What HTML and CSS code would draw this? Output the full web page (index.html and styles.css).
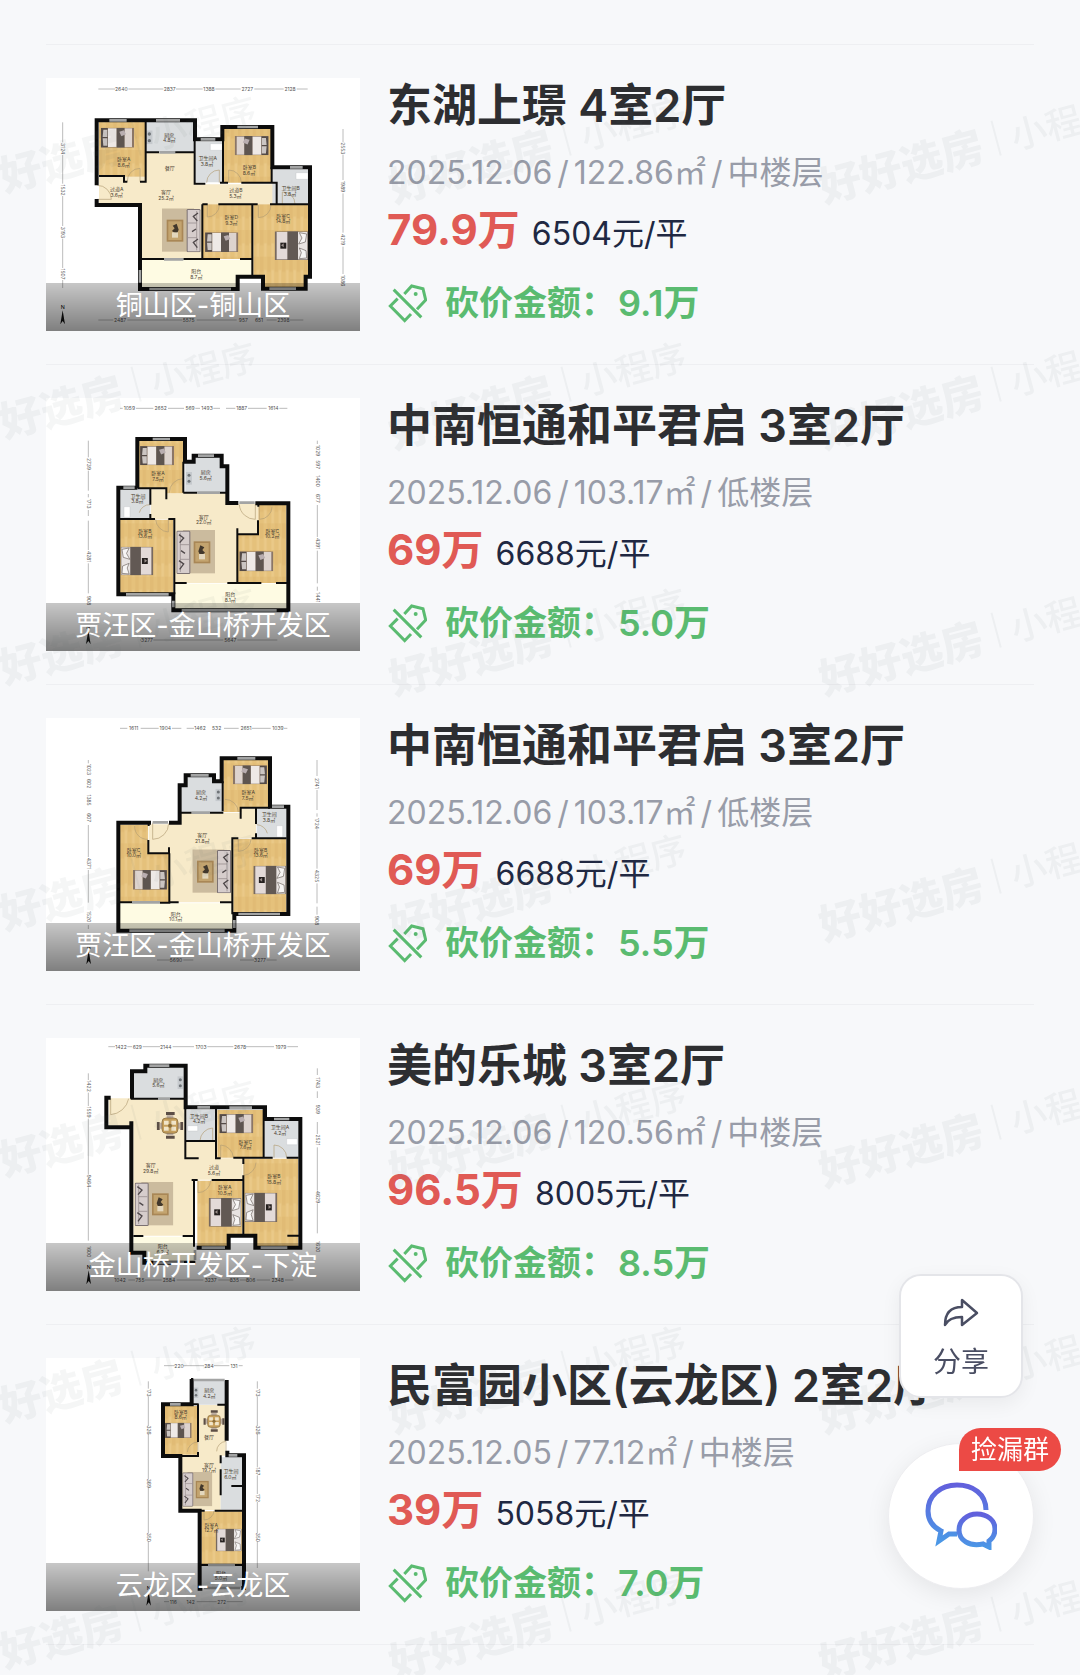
FILE: index.html
```html
<!DOCTYPE html>
<html lang="zh-CN">
<head>
    <meta charset="UTF-8">
    <meta name="viewport" content="width=device-width, initial-scale=1.0">
    <title>好好选房</title>
    <link rel="stylesheet" href="styles.css">
</head>
<body>
    <!-- shared symbols -->
    <svg class="defs" aria-hidden="true">
        <linearGradient id="chatGradient" x1="0" y1="0" x2="0" y2="1">
            <stop offset="0" stop-color="#6260dc"/>
            <stop offset="1" stop-color="#4b97e6"/>
        </linearGradient>
        <pattern id="wood" width="22" height="80" patternUnits="userSpaceOnUse">
            <rect width="22" height="80" fill="#e5c17b"/>
            <rect width="10" height="46" fill="#e1bb75"/>
            <rect x="12" y="40" width="8" height="40" fill="#eac988"/>
        </pattern>
        <symbol id="cut" viewBox="10 15 120 120">
            <path d="M62 48 84 24l34 8 8 34-26 28M42 62 20 84l43 44 19-20M30 35l83 83" fill="none" stroke="currentColor" stroke-width="9"/>
            <circle cx="96" cy="48" r="6" fill="currentColor"/>
        </symbol>
        <symbol id="bed" viewBox="0 0 100 60" preserveAspectRatio="none">
            <rect width="100" height="60" fill="#8b7666"/>
            <rect x="1" y="1" width="20" height="58" fill="#544b47"/>
            <path d="M8 6h12v22H6zM6 32h14v22H8z" fill="#cbc5c2"/>
            <rect x="22" y="2" width="26" height="56" fill="#eee9e6"/>
            <rect x="48" y="0" width="24" height="60" fill="#5e5550"/>
            <rect x="72" y="2" width="22" height="56" fill="#ddd3ce"/>
            <path d="M56 12l14-4 6 12-14 6z" fill="#b9aeb0"/>
        </symbol>
        <symbol id="bigbed" viewBox="0 0 100 86" preserveAspectRatio="none">
            <rect width="100" height="86" fill="#77695f"/>
            <rect x="2" y="2" width="28" height="82" fill="#e8e3e1"/>
            <path d="M4 8l22-4-8 16 10 18-20-6zM4 80l22 2-6-18 6-14L6 58z" fill="#f7f5f4" stroke="#6b625d" stroke-width="2"/>
            <rect x="30" width="32" height="86" fill="#625954"/>
            <rect x="62" y="2" width="32" height="82" fill="#e3dad8"/>
            <rect x="65" y="34" width="18" height="18" fill="#25201f"/>
            <path d="M73 36l8 6-8 6z" fill="#9b8f8c"/>
        </symbol>
        <symbol id="sofa" viewBox="0 0 116 132" preserveAspectRatio="none">
            <rect x="20" width="96" height="130" fill="#cbbb9e"/>
            <rect x="52" y="34" width="50" height="66" fill="#a98756"/>
            <rect x="57" y="39" width="40" height="56" fill="#c3a46f"/>
            <path d="M72 46l12 6-6 8 8 8-14 10-6-14z" fill="#42382c"/>
            <rect x="68" y="72" width="18" height="16" fill="#e3d7bd"/>
            <rect x="0" y="2" width="42" height="130" rx="4" fill="#7b7172"/>
            <rect x="3" y="5" width="36" height="124" fill="#d6cdcc"/>
            <path d="M12 8v118M12 44h26M12 88h26" stroke="#8d8283" stroke-width="2"/>
            <path d="M8 14l14 10-12 14M8 92l14 10-12 16M14 62l12 8" fill="none" stroke="#4f484a" stroke-width="4"/>
        </symbol>
        <symbol id="table" viewBox="0 0 80 80">
            <path d="M28 0h26v9H28zM28 71h26v9H28zM0 30h9v24H0zM71 30h9v24h-9z" fill="#5c4e46"/>
            <path d="M30 10h20v12H30zM30 58h20v12H30zM10 32h12v18H10zM58 32h12v18H58z" fill="#bfb0a5"/>
            <rect x="16" y="18" width="48" height="46" rx="12" fill="#c69f5c" stroke="#7b6238" stroke-width="2"/>
            <path d="M22 26h14v12H22zM44 26h14v12H44zM22 44h14v12H22zM44 44h14v12H44z" fill="#f1e5c9"/>
            <circle cx="40" cy="41" r="6" fill="#8d6f3b"/>
        </symbol>
        <symbol id="stove" viewBox="0 0 20 42">
            <rect width="20" height="42" fill="#c5c9cd"/>
            <circle cx="10" cy="11" r="5" fill="#6e7377"/>
            <circle cx="10" cy="31" r="5" fill="#6e7377"/>
        </symbol>
        <symbol id="north" viewBox="0 0 20 60">
            <text x="10" y="13" text-anchor="middle">N</text>
            <path d="M10 18 17 60 10 50 3 60z" fill="#111"/>
        </symbol>
    </svg>

    <main class="list">
        <a class="house" href="#">
            <div class="photo">
                <svg class="plan" viewBox="18 24 942 759" role="img" aria-label="东湖上璟户型图">
                    <path class="floor" d="M177 320h138v-73h147v96h248v60H488v164H305V400H177z"/>
                    <path class="wood" d="M177 155h138v165H177zM552 175h142v163H552zM488 403h148v164H488zM640 403h165v214h-13v38H675v-38h-35z"/>
                    <path class="tile" d="M317 155h145v92H317zM467 215h82v122h-82zM697 298h110v105H697z"/>
                    <path class="balcony" d="M305 570h332v47h-47v38H305z"/>
                    <use href="#bed" x="182" y="173" width="100" height="60"/>
                    <use href="#bed" transform="translate(686 198) scale(-1 1)" width="102" height="58"/>
                    <use href="#bed" x="495" y="487" width="100" height="59"/>
                    <use href="#bigbed" transform="translate(804 484) scale(-1 1)" width="100" height="86"/>
                    <use href="#sofa" transform="translate(482 415) scale(-1 1)" width="116" height="132"/>
                    <use href="#stove" x="318" y="181" width="20" height="42"/>
                    <path class="fixture" d="M511 221h36v20h-36zM768 308h36v20h-36z"/>
                    <path class="door" d="M262 335a38 38 0 0 1 38-40v40M500 338a38 38 0 0 1 38-38v38M566 338v-38a38 38 0 0 1 38 38M172 346a42 42 0 0 1 42 42h-42M502 405v36a36 36 0 0 0 36-36M655 405v38a38 38 0 0 0 38-38M727 402v-36a36 36 0 0 1 38 36"/>
                    <path class="wall" d="M170 346V151h295v57h82v-37h150v121h113v328h-13v36H669v-36h-76v37H300V405H170v-18"/>
                    <path class="inner" d="M317 151v184h-17M177 318h75v17h10M317 247h40M405 247h60M464 208v133h32M540 338h24M549 208v130M604 338h90M695 292v46h15v65M487 403v164M487 403h16M535 403h118M690 403h120M637 403v214M300 567h72M430 567h110M600 567h37"/>
                    <path class="window" d="M208 151h52M348 151h72M482 208h44M592 171h62M750 292h38M328 657h245M688 656h80M300 600v38M358 247h48M372 568h58"/>
                    <path class="dim" d="M175 57h50M265 57h105M408 57h80M526 57h76M643 57h88M770 57h33M68 157v60M68 255v86M68 378v90M68 506v88M68 630v24M909 177v40M909 254v76M909 370v118M909 530v82M175 750h45M262 750h165M470 750h120M680 750h30M750 750h40"/>
                    <g class="size">
                        <text x="244" y="62">2640</text><text x="389" y="62">2837</text><text x="507" y="62">1388</text><text x="622" y="62">2727</text><text x="750" y="62">2128</text>
                        <text transform="translate(63 236) rotate(90)">3124</text><text transform="translate(63 360) rotate(90)">1532</text><text transform="translate(63 487) rotate(90)">3193</text><text transform="translate(63 612) rotate(90)">1507</text>
                        <text transform="translate(904 235) rotate(90)">2553</text><text transform="translate(904 350) rotate(90)">1989</text><text transform="translate(904 509) rotate(90)">4219</text><text transform="translate(904 632) rotate(90)">1086</text>
                        <text x="240" y="755">2487</text><text x="446" y="755">5575</text><text x="610" y="755">957</text><text x="657" y="755">651</text><text x="730" y="755">2398</text>
                    </g>
                    <g class="room">
                        <text x="251" y="274">卧室A</text><text x="251" y="291">8.6㎡</text><text x="388" y="200">厨房</text><text x="388" y="216">4.8㎡</text><text x="389" y="301">餐厅</text>
                        <text x="503" y="270">卫生间A</text><text x="501" y="287">3.8㎡</text><text x="628" y="297">卧室B</text><text x="627" y="314">8.6㎡</text><text x="230" y="364">过道A</text><text x="230" y="381">3.6㎡</text>
                        <text x="378" y="372">客厅</text><text x="378" y="389">25.2㎡</text><text x="588" y="366">过道B</text><text x="586" y="384">5.3㎡</text><text x="752" y="361">卫生间B</text><text x="750" y="379">3.8㎡</text>
                        <text x="574" y="448">卧室D</text><text x="574" y="465">9.3㎡</text><text x="729" y="443">卧室C</text><text x="729" y="460">14.8㎡</text><text x="469" y="610">阳台</text><text x="469" y="627">8.7㎡</text>
                    </g>
                    <use href="#north" x="58" y="702" width="20" height="62"/>
                </svg>
                <span class="area">铜山区-铜山区</span>
            </div>
            <div class="info">
                <h2>东湖上璟 4室2厅</h2>
                <p class="meta"><span>2025.12.06</span><span>/</span><span>122.86㎡</span><span>/</span><span>中楼层</span></p>
                <p class="price"><strong>79.9万</strong><span>6504元/平</span></p>
                <p class="bargain"><svg aria-hidden="true"><use href="#cut"/></svg>砍价金额：<span>9.1万</span></p>
            </div>
        </a>

        <a class="house" href="#">
            <div class="photo">
                <svg class="plan" viewBox="18 24 942 759" role="img" aria-label="中南恒通和平君启户型图">
                    <path class="floor" d="M333 298h50v12h178v31h94v92h-63v146H403V387h-70z"/>
                    <path class="wood" d="M294 152h137v158h-51v-15h-86zM240 389h160v223H240zM655 345h84v234H592V433h63z"/>
                    <path class="tile" d="M436 217h30v-18h78v30h15v78H436zM241 298h90v88h-90z"/>
                    <path class="balcony" d="M405 581h336v77H405z"/>
                    <use href="#bed" x="300" y="168" width="102" height="58"/>
                    <use href="#bigbed" x="242" y="470" width="98" height="86"/>
                    <use href="#bed" x="598" y="484" width="102" height="60"/>
                    <use href="#sofa" x="409" y="420" width="116" height="132"/>
                    <use href="#stove" x="438" y="245" width="18" height="40"/>
                    <path class="fixture" d="M252 350h18v32h-18z"/>
                    <path class="door" d="M388 308a42 42 0 0 1 42-42M347 388a40 40 0 0 0 38 38v-38M298 368a32 32 0 0 1 32-24M598 344a48 48 0 0 0 48 44v-44M658 350v38a38 38 0 0 0 38-38"/>
                    <path class="wall" d="M292 294V147h143v68h26v-18h84v32h17v110h33M646 340h99v321H400v-48H235V293h57"/>
                    <path class="inner" d="M292 295h87v33M331 298v46M331 372v14M240 387h105M385 387h18v226M430 215v93M430 308h42M540 308h22M655 340v10M592 415v18h62v-42M592 433v146h-30M592 579h72M708 579h37M400 579h40"/>
                    <path class="window" d="M338 147h52M474 197h48M250 293h34M258 613h128M425 661h285M400 632v20M472 308h68M598 338h46"/>
                    <path class="dim" d="M240 55h8M288 55h52M384 55h48M466 55h14M520 55h20M558 55h28M624 55h56M718 55h24M145 152v50M145 242v60M145 312v10M145 360v18M145 392v88M145 520v90M832 152v10M832 345v96M832 482v98M832 590v12M300 750h4M340 750h210M592 750h120"/>
                    <g class="size">
                        <text x="268" y="61">1059</text><text x="362" y="61">2652</text><text x="450" y="61">569</text><text x="501" y="61">1493</text><text x="605" y="61">1887</text><text x="700" y="61">1614</text>
                        <text transform="translate(140 222) rotate(90)">2739</text><text transform="translate(140 341) rotate(90)">1713</text><text transform="translate(140 500) rotate(90)">4281</text><text transform="translate(140 632) rotate(90)">908</text>
                        <text transform="translate(827 182) rotate(90)">1029</text><text transform="translate(827 224) rotate(90)">597</text><text transform="translate(827 273) rotate(90)">1400</text><text transform="translate(827 325) rotate(90)">677</text><text transform="translate(827 461) rotate(90)">4391</text><text transform="translate(827 622) rotate(90)">1441</text>
                        <text x="321" y="756">3277</text><text x="571" y="756">5647</text>
                    </g>
                    <g class="room">
                        <text x="354" y="255">卧室A</text><text x="354" y="272">7.5㎡</text><text x="497" y="253">厨房</text><text x="497" y="270">5.6㎡</text><text x="294" y="323">卫生间</text><text x="292" y="340">3.8㎡</text>
                        <text x="491" y="386">客厅</text><text x="491" y="403">22.0㎡</text><text x="315" y="428">卧室B</text><text x="315" y="445">13.6㎡</text><text x="697" y="428">卧室C</text><text x="697" y="445">10.2㎡</text><text x="571" y="618">阳台</text><text x="571" y="635">8.1㎡</text>
                    </g>
                    <use href="#north" x="135" y="702" width="20" height="62"/>
                </svg>
                <span class="area">贾汪区-金山桥开发区</span>
            </div>
            <div class="info">
                <h2>中南恒通和平君启 3室2厅</h2>
                <p class="meta"><span>2025.12.06</span><span>/</span><span>103.17㎡</span><span>/</span><span>低楼层</span></p>
                <p class="price"><strong>69万</strong><span>6688元/平</span></p>
                <p class="bargain"><svg aria-hidden="true"><use href="#cut"/></svg>砍价金额：<span>5.0万</span></p>
            </div>
        </a>

        <a class="house" href="#">
            <div class="photo">
                <svg class="plan" viewBox="18 24 942 759" role="img" aria-label="中南恒通和平君启户型图">
                    <path class="floor" d="M423 308h178v-12h47v88h-70v193H388V431h-62v-88h97z"/>
                    <path class="wood" d="M550 150h136v142h-82v14h-54zM580 386h159v225H580zM240 344h84v87h63v146H240z"/>
                    <path class="tile" d="M425 228h15v-30h78v18h28v90H425zM650 296h90v88h-90z"/>
                    <path class="balcony" d="M240 580h338v78H240z"/>
                    <use href="#bed" transform="translate(681 166) scale(-1 1)" width="102" height="57"/>
                    <use href="#bed" transform="translate(381 480) scale(-1 1)" width="102" height="59"/>
                    <use href="#bigbed" transform="translate(738 467) scale(-1 1)" width="98" height="86"/>
                    <use href="#sofa" transform="translate(573 418) scale(-1 1)" width="116" height="132"/>
                    <use href="#stove" x="526" y="236" width="18" height="38"/>
                    <path class="fixture" d="M710 347h18v34h-18z"/>
                    <path class="door" d="M555 268a40 40 0 0 1 40 38M595 388v36a38 38 0 0 0 38-36M650 344a34 34 0 0 1 32 26M338 338v50a48 48 0 0 0 48-48M284 348a38 38 0 0 0 40 40"/>
                    <path class="wall" d="M333 338h-98v324h348v-50h162V290h-55V145H545v69h-23v-18h-85v30h-18v112h-32"/>
                    <path class="inner" d="M548 214v90M510 308h40M419 308h36M690 293h-88v33M648 296v46M648 370v14M740 385H635M595 385h-18v228M326 338v10M325 390v40h62v-18M388 430v148H360M240 577h36M388 577h28M540 577h40"/>
                    <path class="window" d="M592 145h54M452 196h54M696 290h36M595 612h125M268 662h286M583 630v24M338 337h46M455 308h55M276 577h84"/>
                    <path class="dim" d="M240 55h22M302 55h54M396 55h28M440 55h22M552 55h44M636 55h56M732 55h10M145 150v10M145 345v96M145 480v98M145 645v12M831 150v48M831 240v60M831 310v10M831 358v118M831 520v60M831 590v24M391 750h-40M430 750h30M600 750h42M680 750h30"/>
                    <g class="size">
                        <text x="281" y="61">1611</text><text x="376" y="61">1904</text><text x="480" y="61">1462</text><text x="530" y="61">532</text><text x="618" y="61">2651</text><text x="714" y="61">1039</text>
                        <text transform="translate(140 178) rotate(90)">1023</text><text transform="translate(140 221) rotate(90)">602</text><text transform="translate(140 270) rotate(90)">1385</text><text transform="translate(140 323) rotate(90)">607</text><text transform="translate(140 460) rotate(90)">4371</text><text transform="translate(140 620) rotate(90)">1520</text>
                        <text transform="translate(826 220) rotate(90)">2741</text><text transform="translate(826 340) rotate(90)">1724</text><text transform="translate(826 498) rotate(90)">4325</text><text transform="translate(826 632) rotate(90)">908</text>
                        <text x="408" y="756">5690</text><text x="660" y="756">3277</text>
                    </g>
                    <g class="room">
                        <text x="625" y="253">卧室A</text><text x="623" y="270">7.5㎡</text><text x="483" y="252">厨房</text><text x="483" y="269">4.2㎡</text><text x="688" y="319">卫生间</text><text x="687" y="336">3.8㎡</text>
                        <text x="487" y="382">客厅</text><text x="487" y="400">21.8㎡</text><text x="662" y="426">卧室B</text><text x="662" y="442">13.6㎡</text><text x="281" y="425">卧室C</text><text x="281" y="442">10.0㎡</text><text x="407" y="617">阳台</text><text x="407" y="634">10.1㎡</text>
                    </g>
                    <use href="#north" x="136" y="702" width="20" height="62"/>
                </svg>
                <span class="area">贾汪区-金山桥开发区</span>
            </div>
            <div class="info">
                <h2>中南恒通和平君启 3室2厅</h2>
                <p class="meta"><span>2025.12.06</span><span>/</span><span>103.17㎡</span><span>/</span><span>低楼层</span></p>
                <p class="price"><strong>69万</strong><span>6688元/平</span></p>
                <p class="bargain"><svg aria-hidden="true"><use href="#cut"/></svg>砍价金额：<span>5.5万</span></p>
            </div>
        </a>

        <a class="house" href="#">
            <div class="photo">
                <svg class="plan" viewBox="18 24 942 759" role="img" aria-label="美的乐城户型图">
                    <path class="floor" d="M206 205h228v128h93v52h81v64H462v168H280V287h-74z"/>
                    <path class="wood" d="M532 240h137v143H532zM610 386h164v264H650v-33h-40zM472 452h135v163h-42v35h-93z"/>
                    <path class="tile" d="M282 130h38v-18h114v93H282zM440 240h86v92h-86zM674 272h102v111H674z"/>
                    <path class="balcony" d="M280 620h182v76H318v-30h-38z"/>
                    <use href="#bed" x="538" y="252" width="102" height="58"/>
                    <use href="#bigbed" transform="translate(604 504) scale(-1 1)" width="98" height="86"/>
                    <use href="#bigbed" x="614" y="488" width="98" height="88"/>
                    <use href="#sofa" x="284" y="456" width="116" height="132"/>
                    <use href="#table" x="350" y="244" width="80" height="84"/>
                    <use href="#stove" x="412" y="137" width="18" height="42"/>
                    <path class="fixture" d="M443 287h30v16h-30zM740 326h32v18h-32z"/>
                    <path class="door" d="M212 206v48a60 60 0 0 0 54-48M480 332a40 40 0 0 1 38-38v38M542 383v-38a40 40 0 0 1 38 38M702 383v-38a38 38 0 0 1 38 38M612 396v40a40 40 0 0 0 36-38M474 452v36a38 38 0 0 0 38-36"/>
                    <path class="wall" d="M212 203h-13v89h76M276 206v-82h40v-17h121v125h238v35h106v386H646v-36h-80v36H470M274 274v394h39v30h153"/>
                    <path class="inner" d="M272 206h82M390 206h46M436 232v153h40M438 333h90M528 237v148h14M580 383h30M671 235v148M608 383h90M740 383h36M610 386v16M610 436v180M455 450h18M515 450h95M462 450v200M742 617h35M280 618h30M428 618h32"/>
                    <path class="window" d="M328 107h60M472 232h38M568 233h68M702 267h46M485 653h70M662 653h80M465 660v30M340 698h92M354 206h36"/>
                    <path class="dim" d="M205 50h20M262 50h14M308 50h52M398 50h64M502 50h78M618 50h84M742 50h32M145 130v20M145 188v40M145 266v168M145 472v160M832 115v20M832 184v20M832 276v36M832 352v130M832 520v90M265 750h20M315 750h50M410 750h80M535 750h35M600 750h20M650 750h40M735 750h25"/>
                    <g class="size">
                        <text x="243" y="56">1422</text><text x="292" y="56">629</text><text x="377" y="56">2144</text><text x="483" y="56">1703</text><text x="600" y="56">2678</text><text x="723" y="56">1979</text>
                        <text transform="translate(140 168) rotate(90)">1422</text><text transform="translate(140 246) rotate(90)">1559</text><text transform="translate(140 453) rotate(90)">9464</text><text transform="translate(140 665) rotate(90)">1600</text>
                        <text transform="translate(827 158) rotate(90)">1743</text><text transform="translate(827 238) rotate(90)">939</text><text transform="translate(827 330) rotate(90)">2521</text><text transform="translate(827 501) rotate(90)">4629</text><text transform="translate(827 650) rotate(90)">1620</text>
                        <text x="240" y="757">1042</text><text x="300" y="757">755</text><text x="387" y="757">2584</text><text x="512" y="757">3237</text><text x="583" y="757">835</text><text x="632" y="757">806</text><text x="713" y="757">2348</text>
                    </g>
                    <g class="room">
                        <text x="355" y="155">厨房</text><text x="355" y="172">5.6㎡</text><text x="477" y="263">卫生间B</text><text x="477" y="280">4.2㎡</text><text x="616" y="341">卧室C</text><text x="617" y="358">7.6㎡</text><text x="720" y="297">卫生间A</text><text x="720" y="315">4.2㎡</text>
                        <text x="332" y="411">客厅</text><text x="332" y="428">29.8㎡</text><text x="522" y="417">过道</text><text x="522" y="434">5.6㎡</text><text x="554" y="478">卧室A</text><text x="554" y="495">10.5㎡</text><text x="702" y="445">卧室B</text><text x="702" y="462">15.8㎡</text><text x="368" y="655">阳台</text><text x="368" y="672">6.2㎡</text>
                    </g>
                    <use href="#north" x="136" y="702" width="20" height="62"/>
                </svg>
                <span class="area">金山桥开发区-下淀</span>
            </div>
            <div class="info">
                <h2>美的乐城 3室2厅</h2>
                <p class="meta"><span>2025.12.06</span><span>/</span><span>120.56㎡</span><span>/</span><span>中楼层</span></p>
                <p class="price"><strong>96.5万</strong><span>8005元/平</span></p>
                <p class="bargain"><svg aria-hidden="true"><use href="#cut"/></svg>砍价金额：<span>8.5万</span></p>
            </div>
        </a>

        <a class="house" href="#">
            <div class="photo">
                <svg class="plan" viewBox="18 24 942 759" role="img" aria-label="民富园小区户型图">
                    <path class="floor" d="M476 165h80v152h-14v163H425V318h51z"/>
                    <path class="wood" d="M374 168h99v146h-99zM484 484h122v160H484z"/>
                    <path class="tile" d="M460 92h96v72h-96zM542 322h64v157h-64zM484 648h122v66H484z"/>
                    <use href="#bed" x="375" y="218" width="80" height="46"/>
                    <use href="#bigbed" transform="translate(605 536) scale(-1 1)" width="78" height="68"/>
                    <use href="#sofa" x="427" y="366" width="90" height="104"/>
                    <use href="#table" x="490" y="180" width="64" height="66"/>
                    <use href="#stove" x="460" y="112" width="16" height="32"/>
                    <path class="door" d="M442 306a32 32 0 0 1 32-30v30M530 304a30 30 0 0 1 28-30v30M492 482v28a30 30 0 0 0 30-28"/>
                    <path class="wall" d="M560 272V90M453 90h7M455 87v76h-86v155h52v164h58v234h8M562 302v14h50v398h-8"/>
                    <path class="inner" d="M452 163h24M532 164h28M474 163v113M474 306v12h-52M542 316v24M542 358v78M574 408h34M420 482h74M524 482h84M480 645h24M584 645h26"/>
                    <path class="window" d="M462 90h92M390 163h32M566 316h26M492 714h108M504 645h80"/>
                    <path class="dim" d="M372 47h32M430 47h62M522 47h46M596 47h12M325 94v22M325 140v88M325 252v136M325 412v138M325 574v90M652 94v22M652 140v88M652 252v100M652 376v56M652 456v94M652 574v80M372 755h15M470 755h60M560 755h48"/>
                    <g class="size">
                        <text x="417" y="53">220</text><text x="507" y="53">284</text><text x="582" y="53">131</text>
                        <text transform="translate(320 128) rotate(90)">173</text><text transform="translate(320 240) rotate(90)">326</text><text transform="translate(320 400) rotate(90)">369</text><text transform="translate(320 562) rotate(90)">350</text>
                        <text transform="translate(647 128) rotate(90)">173</text><text transform="translate(647 240) rotate(90)">326</text><text transform="translate(647 364) rotate(90)">187</text><text transform="translate(647 444) rotate(90)">172</text><text transform="translate(647 562) rotate(90)">350</text>
                        <text x="400" y="761">116</text><text x="452" y="761">142</text><text x="545" y="761">272</text>
                    </g>
                    <g class="room">
                        <text x="508" y="127">厨房</text><text x="508" y="143">4.2㎡</text><text x="422" y="191">卧室B</text><text x="422" y="207">8.6㎡</text><text x="507" y="268">餐厅</text><text x="507" y="350">客厅</text><text x="507" y="366">19.7㎡</text>
                        <text x="573" y="370">卫生间</text><text x="571" y="386">6.0㎡</text><text x="514" y="530">卧室A</text><text x="514" y="546">12.7㎡</text><text x="543" y="675">阳台</text><text x="543" y="691">5.0㎡</text>
                    </g>
                    <use href="#north" x="316" y="706" width="20" height="62"/>
                </svg>
                <span class="area">云龙区-云龙区</span>
            </div>
            <div class="info">
                <h2>民富园小区(云龙区) 2室2厅</h2>
                <p class="meta"><span>2025.12.05</span><span>/</span><span>77.12㎡</span><span>/</span><span>中楼层</span></p>
                <p class="price"><strong>39万</strong><span>5058元/平</span></p>
                <p class="bargain"><svg aria-hidden="true"><use href="#cut"/></svg>砍价金额：<span>7.0万</span></p>
            </div>
        </a>
    </main>

    <div class="watermark" aria-hidden="true">
        <span><b>好好选房</b><i></i>小程序</span><span><b>好好选房</b><i></i>小程序</span><span><b>好好选房</b><i></i>小程序</span>
        <span><b>好好选房</b><i></i>小程序</span><span><b>好好选房</b><i></i>小程序</span><span><b>好好选房</b><i></i>小程序</span>
        <span><b>好好选房</b><i></i>小程序</span><span><b>好好选房</b><i></i>小程序</span><span><b>好好选房</b><i></i>小程序</span>
        <span><b>好好选房</b><i></i>小程序</span><span><b>好好选房</b><i></i>小程序</span><span><b>好好选房</b><i></i>小程序</span>
        <span><b>好好选房</b><i></i>小程序</span><span><b>好好选房</b><i></i>小程序</span><span><b>好好选房</b><i></i>小程序</span>
        <span><b>好好选房</b><i></i>小程序</span><span><b>好好选房</b><i></i>小程序</span><span><b>好好选房</b><i></i>小程序</span>
        <span><b>好好选房</b><i></i>小程序</span><span><b>好好选房</b><i></i>小程序</span><span><b>好好选房</b><i></i>小程序</span>
    </div>

    <div class="float">
        <button class="share" type="button">
            <svg viewBox="0 0 36 30" aria-hidden="true">
                <path d="M19 2v7C8 9 2 15 2 27 5 21 10 19 19 19v8l15-12z" fill="none" stroke="#4a4e63" stroke-width="2.5" stroke-linejoin="round"/>
            </svg>
            分享
        </button>
        <button class="chat" type="button" aria-label="捡漏群">
            <svg viewBox="0 0 72 68" aria-hidden="true">
                <path d="M61 28C61 12 48 3 32 3 15 3 3 14 3 29c0 9 5 16 13 20l-2 10 10-7 8 0" fill="none" stroke="url(#chatGradient)" stroke-width="5"/>
                <path d="M52 32c10 0 18 6 18 15 0 5-2 9-6 12l0 6-6-3c-14 3-24-4-24-14 0-9 8-16 18-16z" fill="none" stroke="url(#chatGradient)" stroke-width="5"/>
            </svg>
            <span class="badge">捡漏群</span>
        </button>
    </div>
</body>
</html>
```
FILE: styles.css
```css
* {
    box-sizing: border-box;
}
body {
    margin: 0;
    background-color: #f7f8fa;
    color: #2d2e31;
    font-family: Inter, "Noto Sans CJK SC", sans-serif;
}
h2, p {
    margin: 0;
}
.defs {
    display: block;
    width: 0;
    height: 0;
}
.list {
    margin: 44px 46px 0;
    border-bottom: 1px solid #eeeff2;
}
.house {
    display: flex;
    gap: 27px;
    padding: 33px 0;
    border-top: 1px solid #eeeff2;
    color: inherit;
    text-decoration: none;
}

/* floor plan */
.photo {
    position: relative;
    flex: none;
    width: 314px;
    height: 253px;
    background-color: #fff;
}
.plan {
    display: block;
    width: 100%;
    height: 100%;
}
.floor {
    fill: #f7eac9;
}
.wood {
    fill: url(#wood);
}
.tile {
    fill: #dadddf;
}
.balcony {
    fill: #fefbe3;
}
.fixture {
    fill: #fff;
    stroke: #b9bcbe;
}
.wall, .inner, .window, .door, .dim {
    fill: none;
}
.wall {
    stroke: #0c0c0c;
    stroke-width: 12;
}
.inner {
    stroke: #0c0c0c;
    stroke-width: 6;
}
.window {
    stroke: #a3a4a4;
    stroke-width: 8;
}
.door {
    stroke: #b29d74;
    stroke-width: 2;
}
.dim {
    stroke: #9a9a9a;
    stroke-width: 2;
}
.size, .room {
    fill: #555;
    font-size: 15px;
    text-anchor: middle;
}
.room {
    fill: #4b4132;
}
.area {
    position: absolute;
    left: 0;
    right: 0;
    bottom: 0;
    height: 48px;
    background: linear-gradient(rgba(0, 0, 0, 0.22), rgba(0, 0, 0, 0.5));
    color: #fff;
    font-size: 27px;
    line-height: 46px;
    text-align: center;
}

/* house info */
.info {
    flex: 1;
    min-width: 0;
    white-space: nowrap;
}
.info h2 {
    font-size: 45px;
    font-weight: 600;
    line-height: 56px;
}
.meta {
    display: flex;
    gap: 5px;
    margin-top: 17px;
    color: #989ca8;
    font-size: 32px;
    line-height: 44px;
}
.price {
    display: flex;
    align-items: baseline;
    gap: 12px;
    margin-top: 10px;
    color: #202842;
    font-size: 32px;
    line-height: 50px;
}
.price strong {
    color: #e05a55;
    font-size: 42px;
    font-weight: 700;
}
.bargain {
    display: flex;
    align-items: center;
    margin-top: 22px;
    color: #5abb70;
    font-size: 34px;
    font-weight: 600;
    line-height: 44px;
}
.bargain svg {
    width: 40px;
    height: 40px;
    margin-right: 18px;
}
.bargain span {
    margin-left: 3px;
    font-size: 36px;
}

/* watermark over the whole page */
.watermark {
    position: fixed;
    top: 22px;
    left: -108px;
    right: -108px;
    bottom: 0;
    display: grid;
    grid-template-columns: repeat(3, 430px);
    grid-auto-rows: 246px;
    align-items: center;
    justify-items: center;
    overflow: hidden;
    pointer-events: none;
}
.watermark span {
    display: flex;
    align-items: center;
    color: rgba(90, 95, 110, 0.06);
    font-size: 36px;
    font-weight: 500;
    white-space: nowrap;
    transform: rotate(-15deg);
}
.watermark b {
    font-size: 42px;
    font-weight: 900;
}
.watermark i {
    width: 2px;
    height: 36px;
    margin: 0 14px;
    background-color: rgba(90, 95, 110, 0.06);
}

/* floating buttons */
.float {
    position: fixed;
    right: 46px;
    bottom: 86px;
    display: flex;
    flex-direction: column;
    align-items: center;
    gap: 45px;
}
.float button {
    font-family: inherit;
    cursor: pointer;
}
.share {
    display: flex;
    flex-direction: column;
    align-items: center;
    justify-content: center;
    gap: 14px;
    width: 124px;
    height: 124px;
    padding: 8px 0 0;
    border: 2px solid #e4e5e9;
    border-radius: 22px;
    background-color: #fff;
    box-shadow: 0 6px 20px rgba(0, 0, 0, 0.06);
    color: #4a4e63;
    font-size: 28px;
    line-height: 40px;
}
.share svg {
    width: 36px;
    height: 30px;
}
.chat {
    position: relative;
    display: flex;
    align-items: center;
    justify-content: center;
    width: 146px;
    height: 146px;
    padding: 0;
    border: 1px solid #ededf0;
    border-radius: 50%;
    background-color: #fff;
    box-shadow: 0 6px 24px rgba(0, 0, 0, 0.08);
}
.chat svg {
    width: 72px;
    height: 68px;
}
.badge {
    position: absolute;
    top: -16px;
    right: -28px;
    padding: 0 12px;
    border-radius: 22px 22px 22px 0;
    background-color: #ec4a45;
    color: #fff;
    font-size: 26px;
    line-height: 43px;
}
```
